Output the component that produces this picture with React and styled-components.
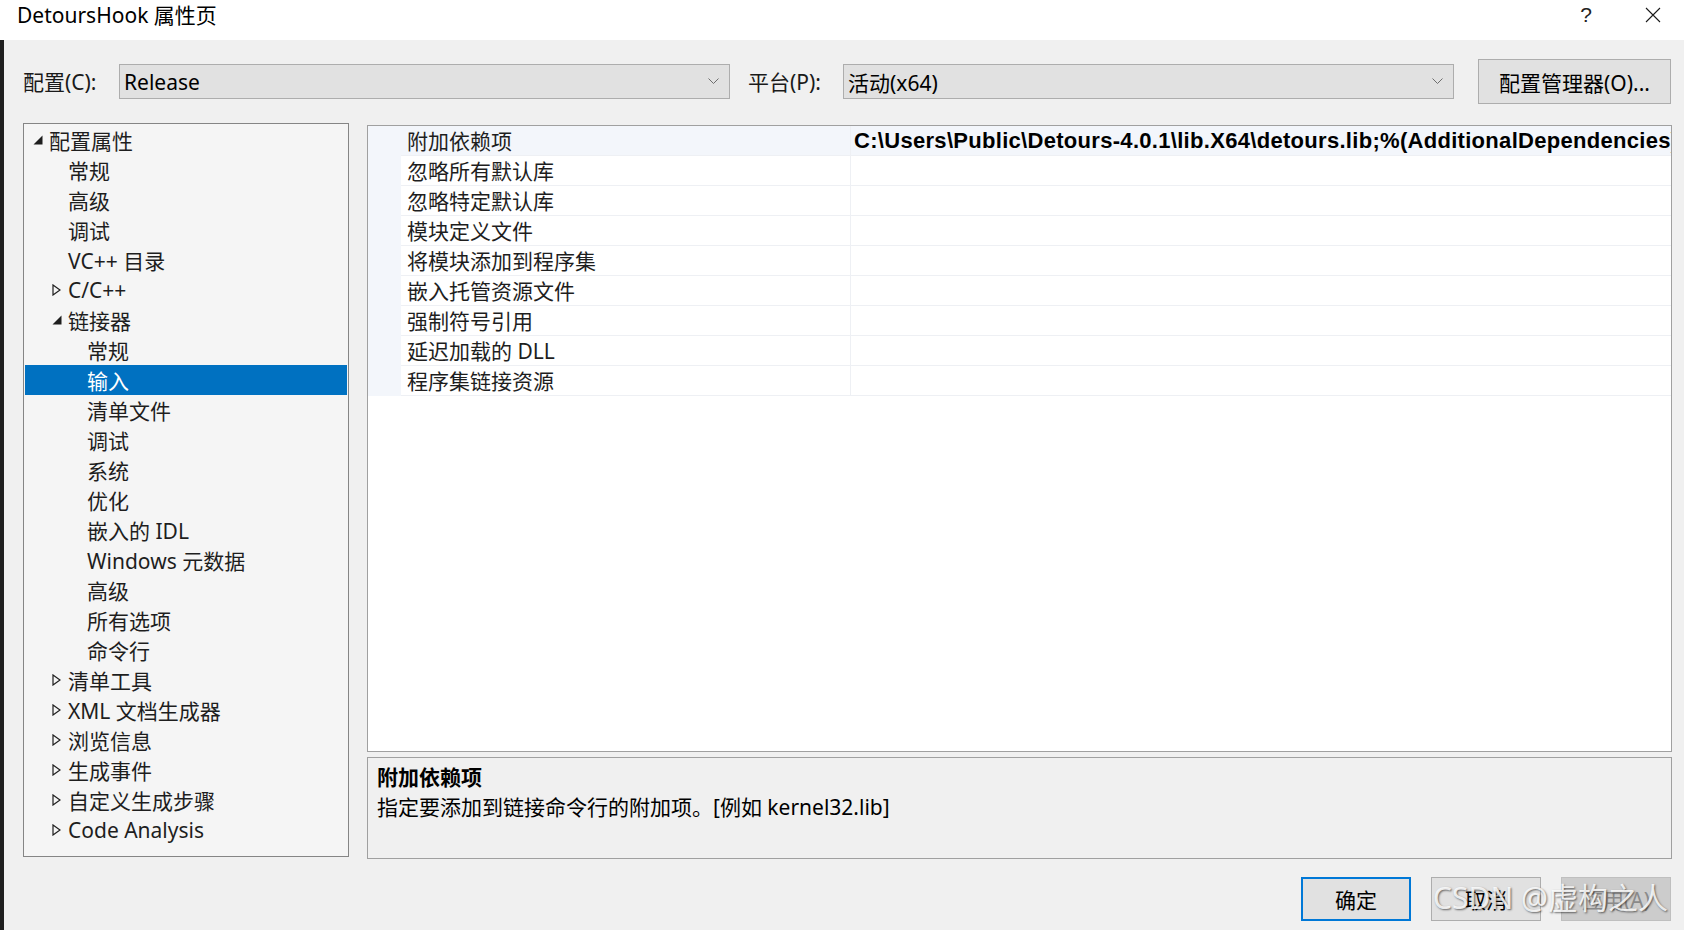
import React from 'react';
import styled, { createGlobalStyle } from 'styled-components';

const GlobalStyle = createGlobalStyle`
    html, body {
        margin: 0;
        padding: 0;
        background: #f0f0f0;
    }
    body {
        font-family: "Noto Sans", "Noto Sans CJK SC", sans-serif;
        color: #1a1a1a;
    }
`;

const treeItems = [
    { label: '配置属性', level: 0, arrow: 'open' },
    { label: '常规', level: 1 },
    { label: '高级', level: 1 },
    { label: '调试', level: 1 },
    { label: 'VC++ 目录', level: 1 },
    { label: 'C/C++', level: 1, arrow: 'closed' },
    { label: '链接器', level: 1, arrow: 'open' },
    { label: '常规', level: 2 },
    { label: '输入', level: 2, selected: true },
    { label: '清单文件', level: 2 },
    { label: '调试', level: 2 },
    { label: '系统', level: 2 },
    { label: '优化', level: 2 },
    { label: '嵌入的 IDL', level: 2 },
    { label: 'Windows 元数据', level: 2 },
    { label: '高级', level: 2 },
    { label: '所有选项', level: 2 },
    { label: '命令行', level: 2 },
    { label: '清单工具', level: 1, arrow: 'closed' },
    { label: 'XML 文档生成器', level: 1, arrow: 'closed' },
    { label: '浏览信息', level: 1, arrow: 'closed' },
    { label: '生成事件', level: 1, arrow: 'closed' },
    { label: '自定义生成步骤', level: 1, arrow: 'closed' },
    { label: 'Code Analysis', level: 1, arrow: 'closed' },
];

const properties = [
    { name: '附加依赖项', value: 'C:\\Users\\Public\\Detours-4.0.1\\lib.X64\\detours.lib;%(AdditionalDependencies)' },
    { name: '忽略所有默认库', value: '' },
    { name: '忽略特定默认库', value: '' },
    { name: '模块定义文件', value: '' },
    { name: '将模块添加到程序集', value: '' },
    { name: '嵌入托管资源文件', value: '' },
    { name: '强制符号引用', value: '' },
    { name: '延迟加载的 DLL', value: '' },
    { name: '程序集链接资源', value: '' },
];

function Chevron() {
    return (
        <svg width="11" height="7" viewBox="0 0 11 7">
            <polyline points="0.5,0.5 5.5,5.5 10.5,0.5" fill="none" stroke="#6d6d6d" strokeWidth="1" />
        </svg>
    );
}

function Arrow({ type, selected }) {
    const color = selected ? '#ffffff' : '#1e1e1e';
    if (type === 'open') {
        return (
            <svg width="10" height="10" viewBox="0 0 10 10">
                <polygon points="9.5,0.5 9.5,9.5 0.5,9.5" fill={color} />
            </svg>
        );
    }
    if (type === 'closed') {
        return (
            <svg width="9" height="12" viewBox="0 0 9 12">
                <polygon points="1,1 8,6 1,11" fill="none" stroke={color} strokeWidth="1.2" />
            </svg>
        );
    }
    return null;
}

function App() {
    return (
        <Window>
            <GlobalStyle />

            {/* TITLE BAR */}
            <TitleBar>
                <Title>DetoursHook 属性页</Title>
                <TitleButtons>
                    <Help>?</Help>
                    <CloseIcon>
                        <svg width="16" height="16" viewBox="0 0 16 16">
                            <path d="M1 1 L15 15 M15 1 L1 15" stroke="#1a1a1a" strokeWidth="1.1" />
                        </svg>
                    </CloseIcon>
                </TitleButtons>
            </TitleBar>

            <Body>
                {/* CONFIG ROW */}
                <ConfigRow>
                    <Label>配置(C):</Label>
                    <Combo>
                        <span>Release</span>
                        <Chevron />
                    </Combo>
                    <Label $gap>平台(P):</Label>
                    <Combo>
                        <span>活动(x64)</span>
                        <Chevron />
                    </Combo>
                    <ManagerButton>配置管理器(O)...</ManagerButton>
                </ConfigRow>

                <Main>
                    {/* TREE */}
                    <Tree>
                        {treeItems.map((item, i) => (
                            <TreeRow key={i} $level={item.level} $selected={item.selected}>
                                <ArrowSlot>
                                    <Arrow type={item.arrow} selected={item.selected} />
                                </ArrowSlot>
                                {item.label}
                            </TreeRow>
                        ))}
                    </Tree>

                    <RightColumn>
                        {/* PROPERTY GRID */}
                        <Grid>
                            {properties.map((p, i) => (
                                <GridRow key={i} $first={i === 0}>
                                    <Margin />
                                    <NameCell>{p.name}</NameCell>
                                    <ValueCell>{p.value}</ValueCell>
                                </GridRow>
                            ))}
                        </Grid>

                        {/* DESCRIPTION */}
                        <Description>
                            <DescTitle>附加依赖项</DescTitle>
                            <DescText>指定要添加到链接命令行的附加项。[例如 kernel32.lib]</DescText>
                        </Description>
                    </RightColumn>
                </Main>

                {/* FOOTER */}
                <Footer>
                    <DialogButton $primary>确定</DialogButton>
                    <DialogButton>取消</DialogButton>
                    <DialogButton $disabled>应用(A)</DialogButton>
                </Footer>
            </Body>

            <Watermark>CSDN @虚构之人</Watermark>
        </Window>
    );
}

export default App;

const Window = styled.div`
    position: relative;
    width: 1684px;
    height: 930px;
    display: flex;
    flex-direction: column;
    overflow: hidden;
    background: #f0f0f0;
`;

const TitleBar = styled.div`
    height: 40px;
    background: #ffffff;
    display: flex;
    align-items: center;
    justify-content: space-between;
    padding-left: 17px;
`;

const Title = styled.span`
    font-size: 21px;
    color: #000;
    line-height: 28px;
    margin-top: -10px;
`;

const TitleButtons = styled.div`
    display: flex;
    align-items: center;
    margin-top: -10px;
`;

const Help = styled.span`
    width: 30px;
    text-align: center;
    font-family: "Liberation Sans", sans-serif;
    font-size: 21px;
    color: #222;
    margin-right: 44px;
`;

const CloseIcon = styled.span`
    display: flex;
    margin-right: 23px;
`;

const Body = styled.div`
    flex: 1;
    display: flex;
    flex-direction: column;
    border-left: 4px solid #1f1f1f;
`;

const ConfigRow = styled.div`
    height: 45px;
    margin-top: 19px;
    padding-left: 19px;
    display: flex;
    align-items: center;
`;

const Label = styled.span`
    width: ${p => (p.$gap ? '95px' : '96px')};
    margin-left: ${p => (p.$gap ? '18px' : '0')};
    font-size: 21px;
    line-height: 30px;
`;

const Combo = styled.div`
    width: 611px;
    height: 35px;
    box-sizing: border-box;
    background: #e1e1e1;
    border: 1px solid #adadad;
    display: flex;
    align-items: center;
    justify-content: space-between;
    padding: 0 10px 0 4px;
    font-size: 21px;
    color: #000;
`;

const ManagerButton = styled.button`
    margin-left: 24px;
    width: 193px;
    height: 45px;
    background: #e1e1e1;
    border: 1px solid #adadad;
    font-family: inherit;
    font-size: 21px;
    color: #000;
    padding: 0;
`;

const Main = styled.div`
    margin-top: 19px;
    padding-left: 19px;
    display: flex;
    gap: 18px;
    height: 736px;
`;

const Tree = styled.div`
    width: 326px;
    height: 734px;
    box-sizing: border-box;
    background: #f5f5f5;
    border: 1px solid #858585;
    padding: 1px 1px 0;
`;

const TreeRow = styled.div`
    height: 30px;
    display: flex;
    align-items: center;
    padding-left: ${p => 8 + p.$level * 19}px;
    font-size: 21px;
    color: ${p => (p.$selected ? '#ffffff' : '#1e1e1e')};
    background: ${p => (p.$selected ? '#0071c1' : 'transparent')};
    white-space: nowrap;
`;

const ArrowSlot = styled.span`
    width: 16px;
    display: flex;
    align-items: center;
`;

const RightColumn = styled.div`
    width: 1305px;
    display: flex;
    flex-direction: column;
    padding-top: 2px;
    gap: 5px;
`;

const Grid = styled.div`
    height: 627px;
    box-sizing: border-box;
    background: #ffffff;
    border: 1px solid #a0a0a0;
    overflow: hidden;
`;

const GridRow = styled.div`
    height: 30px;
    display: flex;
    background: ${p => (p.$first ? '#f3f6fb' : '#ffffff')};
`;

const Margin = styled.div`
    width: 33px;
    background: #f3f6fb;
`;

const NameCell = styled.div`
    width: 450px;
    box-sizing: border-box;
    padding-left: 6px;
    font-size: 21px;
    line-height: 30px;
    color: #1e1e1e;
    border-bottom: 1px solid #eef0f4;
    border-right: 1px solid #eef0f4;
`;

const ValueCell = styled.div`
    flex: 1;
    min-width: 0;
    box-sizing: border-box;
    padding-left: 3px;
    font-family: "Liberation Sans", "Noto Sans CJK SC", sans-serif;
    font-weight: 700;
    font-size: 22px;
    line-height: 30px;
    letter-spacing: 0.3px;
    color: #000;
    white-space: nowrap;
    overflow: hidden;
    border-bottom: 1px solid #eef0f4;
`;

const Description = styled.div`
    height: 102px;
    box-sizing: border-box;
    border: 1px solid #a0a0a0;
    background: #f0f0f0;
    padding: 4px 9px 0;
`;

const DescTitle = styled.div`
    font-size: 21px;
    font-weight: 700;
    line-height: 30px;
    color: #000;
`;

const DescText = styled.div`
    font-size: 21px;
    line-height: 30px;
    color: #000;
`;

const Footer = styled.div`
    display: flex;
    justify-content: flex-end;
    gap: 20px;
    padding: 18px 13px 0 0;
`;

const DialogButton = styled.button`
    width: 110px;
    height: 44px;
    box-sizing: border-box;
    font-family: inherit;
    font-size: 21px;
    padding: 0;
    background: ${p => (p.$disabled ? '#cccccc' : '#e1e1e1')};
    color: ${p => (p.$disabled ? '#8a8a8a' : '#000')};
    border: ${p => (p.$primary ? '2px solid #0078d7' : p.$disabled ? '1px solid #bfbfbf' : '1px solid #adadad')};
`;

const Watermark = styled.div`
    position: absolute;
    right: 16px;
    bottom: 12px;
    font-family: "Noto Sans", "Noto Sans CJK SC", sans-serif;
    font-size: 30px;
    color: rgba(255, 255, 255, 0.85);
    text-shadow: 1px 1px 2px rgba(0, 0, 0, 0.55);
    pointer-events: none;
    white-space: nowrap;
`;
